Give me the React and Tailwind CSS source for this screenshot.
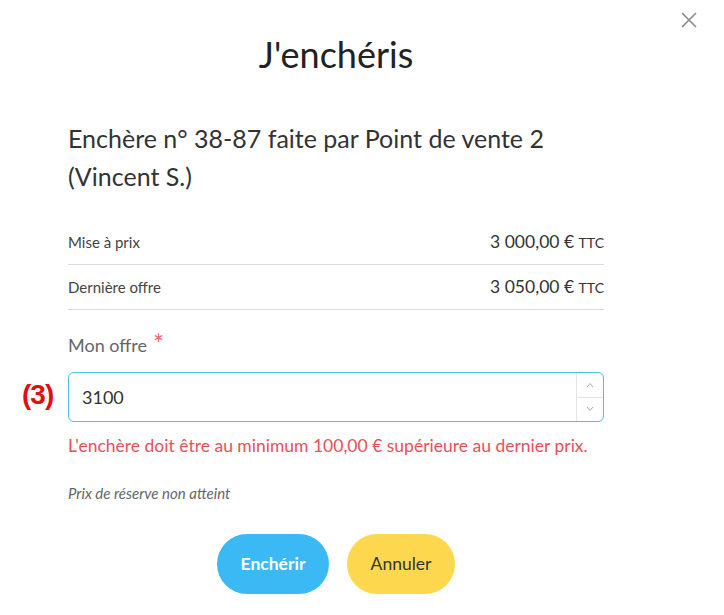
export default function App() {
  return (
    <div className="relative min-h-[615px] w-[724px] bg-white font-['Lato',sans-serif] text-[#333]">
      {/* close */}
      <button className="absolute right-[27px] top-[12px] text-[#8a8a8a]">
        <svg width="16" height="16" viewBox="0 0 16 16" fill="none" stroke="currentColor" strokeWidth="1.6">
          <path d="M1 1L15 15M15 1L1 15" />
        </svg>
      </button>

      <div className="w-[672px] px-[68px] pt-[31px]">
        <h1 className="text-center text-[36px] leading-[46px] text-[#222]">J'enchéris</h1>

        <h2 className="mt-[42px] text-[25px] leading-[38px] text-[#333]">
          Enchère n° 38-87 faite par Point de vente 2 (Vincent S.)
        </h2>

        <div className="mt-[25px]">
          <div className="flex h-[45px] items-center justify-between border-b border-[#dcdcdc]">
            <span className="text-[15px] text-[#444]">Mise à prix</span>
            <span className="text-[17.5px] text-[#333]">
              3 000,00 € <span className="text-[14px]">TTC</span>
            </span>
          </div>
          <div className="flex h-[45px] items-center justify-between border-b border-[#dcdcdc]">
            <span className="text-[15px] text-[#444]">Dernière offre</span>
            <span className="text-[17.5px] text-[#333]">
              3 050,00 € <span className="text-[14px]">TTC</span>
            </span>
          </div>
        </div>

        <div className="mt-[22px] flex items-start text-[18px] text-[#666]">
          <span>Mon offre</span>
          <span className="ml-[6px] mt-[2px] text-[26px] leading-[20px] text-[#f06070]">*</span>
        </div>

        <div className="relative mt-[13px]">
          <span className="absolute left-[-46px] top-[6px] font-['Liberation_Sans',sans-serif] text-[28px] font-bold leading-[34px] tracking-[-1px] text-[#e01010]">
            (3)
          </span>
          <div className="flex h-[50px] overflow-hidden rounded-[6px] border border-[#4dbfe0]">
            <div className="flex flex-1 items-center pl-[13px] text-[18px] text-[#333]">3100</div>
            <div className="flex w-[27px] flex-col border-l border-[#e4e4e4] text-[#aaa]">
              <div className="flex flex-1 items-center justify-center border-b border-[#e4e4e4]">
                <svg width="8" height="6" viewBox="0 0 8 6" fill="none" stroke="currentColor" strokeWidth="1">
                  <path d="M1 5L4 1.5L7 5" />
                </svg>
              </div>
              <div className="flex flex-1 items-center justify-center">
                <svg width="8" height="6" viewBox="0 0 8 6" fill="none" stroke="currentColor" strokeWidth="1">
                  <path d="M1 1L4 4.5L7 1" />
                </svg>
              </div>
            </div>
          </div>
        </div>

        <p className="mt-[11px] text-[17.5px] text-[#e8505b]">
          L'enchère doit être au minimum 100,00 € supérieure au dernier prix.
        </p>

        <p className="mt-[23px] text-[15px] italic text-[#666]">Prix de réserve non atteint</p>

        <div className="mt-[29px] flex justify-center gap-[18px]">
          <button className="h-[60px] w-[112px] rounded-full bg-[#3bb9f4] text-[17.5px] font-bold text-white">
            Enchérir
          </button>
          <button className="h-[60px] w-[108px] rounded-full bg-[#fdd84f] text-[17.5px] text-[#333]">
            Annuler
          </button>
        </div>
      </div>
    </div>
  );
}
